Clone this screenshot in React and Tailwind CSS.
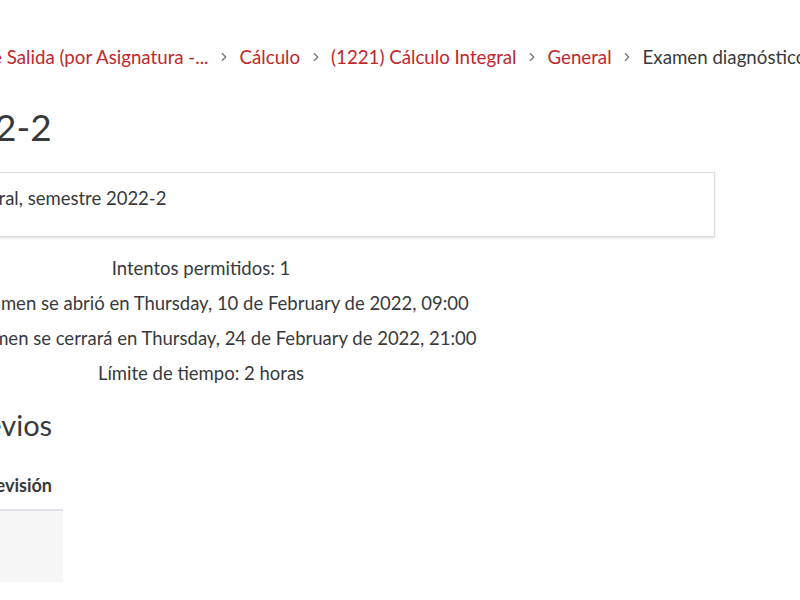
import { ChevronRight } from "lucide-react";

const crumbs = [
  { label: "Exámenes Diagnósticos y de Salida (por Asignatura -...", link: true },
  { label: "Cálculo", link: true },
  { label: "(1221) Cálculo Integral", link: true },
  { label: "General", link: true },
  { label: "Examen diagnóstico de Cálculo Integral, semestre 2022-2", link: false },
];

const info = [
  "Intentos permitidos: 1",
  "Este examen se abrió en Thursday, 10 de February de 2022, 09:00",
  "Este examen se cerrará en Thursday, 24 de February de 2022, 21:00",
  "Límite de tiempo: 2 horas",
];

export default function App() {
  return (
    <div
      className="w-[800px] h-[600px] overflow-hidden bg-white text-[#373a3c]"
      style={{ fontFamily: "Lato, 'Open Sans', sans-serif" }}
    >
      {/* Breadcrumb */}
      <nav className="h-[107px] pt-[43px] ml-[-230px]">
        <ol className="flex items-center whitespace-nowrap text-[18.7px] leading-[28px]">
          {crumbs.map((c, i) => (
            <li key={i} className="flex items-center">
              {i > 0 && <ChevronRight size={14} strokeWidth={2} className="mx-[8.5px] text-[#6a737b]" />}
              <span className={c.link ? "text-[#c0272d]" : "text-[#373a3c]"}>{c.label}</span>
            </li>
          ))}
        </ol>
      </nav>

      <div className="ml-[-313px] w-[1028px]">
        <h2 className="ml-[-90px] text-[37px] leading-[40px] whitespace-nowrap">Examen diagnóstico 2022-2</h2>

        <div className="mt-[25px] border border-[#dcdcdc] shadow-sm h-[65px] pl-[13px] pt-[12px] text-[18.5px]">
          Examen diagnóstico de Cálculo Integral, semestre 2022-2
        </div>

        <div className="mt-[14px] text-center text-[18.5px]">
          {info.map((t) => (
            <p key={t} className="leading-[35px]">{t}</p>
          ))}
        </div>

        <h3 className="ml-[-50px] mt-[14px] text-[29px] leading-[40px] whitespace-nowrap">
          Resumen de sus intentos previos
        </h3>

        <table className="mt-[17px] w-[376px] text-[18px]">
          <thead>
            <tr className="border-b-2 border-[#dee2e6]">
              <th className="px-[11px] py-[10px] text-left font-bold">Intento</th>
              <th className="px-[11px] py-[10px] text-left font-bold">Estado</th>
              <th className="w-px px-[11px] py-[10px] text-left font-bold whitespace-nowrap">Revisión</th>
            </tr>
          </thead>
          <tbody>
            <tr className="bg-[#f7f7f7] h-[72px]">
              <td className="px-[11px]"></td>
              <td className="px-[11px]"></td>
              <td className="px-[11px]"></td>
            </tr>
          </tbody>
        </table>
      </div>
    </div>
  );
}
